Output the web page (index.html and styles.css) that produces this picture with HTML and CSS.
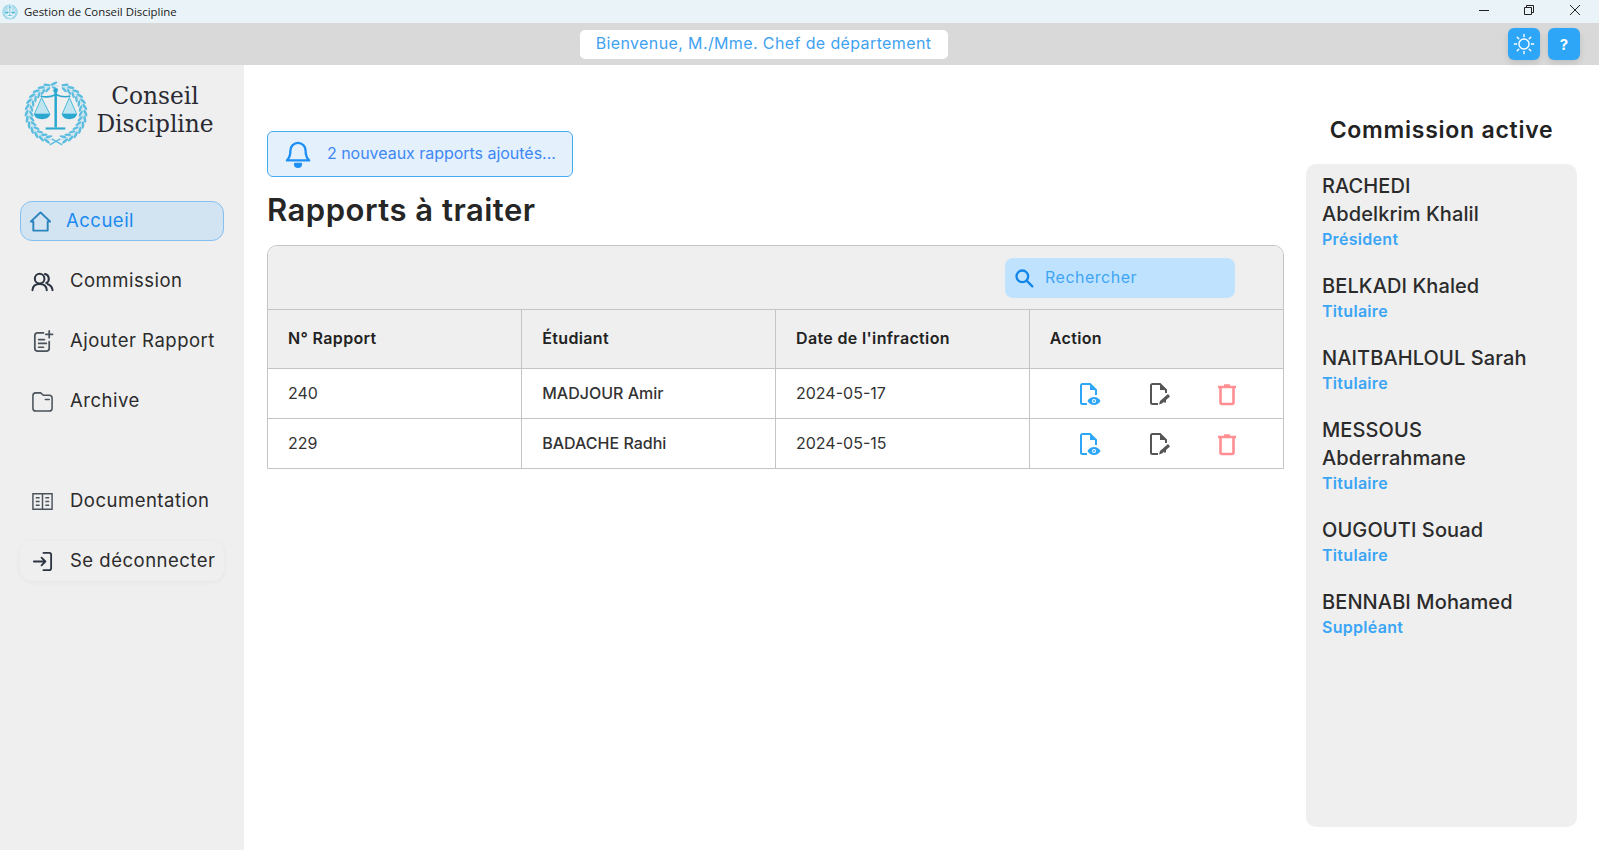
FILE: index.html
```html
<!DOCTYPE html>
<html lang="fr">
<head>
    <meta charset="UTF-8">
    <title>Gestion de Conseil Discipline</title>
    <link rel="stylesheet" href="styles.css">
</head>
<body>
    <svg class="defs" width="0" height="0">
        <symbol id="logo" viewBox="0 0 64 64">
            <g fill="#5dbde0">
                <g id="leaf-pair">
                    <ellipse cx="30" cy="3.500" rx="1.300" ry="3.600" transform="rotate(65 30 3.500)"/>
                    <ellipse cx="31" cy="8" rx="1.200" ry="3.300" transform="rotate(115 31 8)"/>
                    <path d="M27 5.800h8" stroke="#9fd8ec" stroke-width=".6"/>
                </g>
            </g>
            <g id="wreath-half" fill="#5dbde0">
                <use href="#leaf-pair" transform="rotate(22 32 32)"/>
                <use href="#leaf-pair" transform="rotate(34 32 32)"/>
                <use href="#leaf-pair" transform="rotate(46 32 32)"/>
                <use href="#leaf-pair" transform="rotate(58 32 32)"/>
                <use href="#leaf-pair" transform="rotate(70 32 32)"/>
                <use href="#leaf-pair" transform="rotate(82 32 32)"/>
                <use href="#leaf-pair" transform="rotate(94 32 32)"/>
                <use href="#leaf-pair" transform="rotate(106 32 32)"/>
                <use href="#leaf-pair" transform="rotate(118 32 32)"/>
                <use href="#leaf-pair" transform="rotate(130 32 32)"/>
                <use href="#leaf-pair" transform="rotate(142 32 32)"/>
                <use href="#leaf-pair" transform="rotate(154 32 32)"/>
                <use href="#leaf-pair" transform="rotate(166 32 32)"/>
            </g>
            <use href="#wreath-half" transform="matrix(-1 0 0 1 64 0)"/>
            <path d="M26 63l10-6M38 63l-10-6" stroke="#5dbde0" stroke-width="1.400" fill="none"/>
            <path d="M18 17L11 33h15zM45 17l-7 16h14z" fill="#bfe5f1" stroke="#45b4d8" stroke-width=".9"/>
            <path d="M17 15.500c5 1.500 10 1 15-1.500 5 2.500 9 3 14 1.500" fill="none" stroke="#2aa8d0" stroke-width="1.500"/>
            <g fill="#2aa8d0">
                <circle cx="31.500" cy="10.500" r="2.200"/>
                <rect x="30.500" y="12" width="2.400" height="34"/>
                <rect x="22" y="46" width="19" height="2"/>
                <path d="M10.500 33h16c-1 3.500-4 5-8 5s-7-1.500-8-5zM37.500 33h15c-1 3.500-3.500 5-7.500 5s-6.500-1.500-7.500-5z"/>
            </g>
        </symbol>
        <symbol id="act-view" viewBox="0 0 24 24">
            <path d="M10 22H5.500a1.500 1.500 0 0 1-1.500-1.500v-17A1.500 1.500 0 0 1 5.500 2H13l6 6v5" fill="none" stroke="#2ea6f8" stroke-width="2"/>
            <path d="M13 2l6 6h-6z" fill="#2ea6f8"/>
            <path d="M10.500 19c1.500-2.800 3.700-4 6.500-4s5 1.200 6.500 4c-1.500 2.800-3.700 4-6.500 4s-5-1.200-6.500-4z" fill="#2ea6f8"/>
            <circle cx="17" cy="19" r="2" fill="#fff"/>
            <circle cx="17" cy="19" r="1" fill="#2ea6f8"/>
        </symbol>
        <symbol id="act-edit" viewBox="0 0 24 24">
            <path d="M11 22H5.500a1.500 1.500 0 0 1-1.500-1.500v-17A1.500 1.500 0 0 1 5.500 2H13l6 6v3M18 17v3.500" fill="none" stroke="#555" stroke-width="2"/>
            <path d="M13 2l6 6h-6z" fill="#555"/>
            <path d="M12 22.500l1-3.500 8-7 2 2.500-8 7z" fill="#555"/>
        </symbol>
        <symbol id="act-del" viewBox="0 0 24 24">
            <path d="M3 5h18M9 3.500h6" stroke="#ff8f92" stroke-width="2.600" fill="none"/>
            <path d="M5.500 6v14.500a1.500 1.500 0 0 0 1.500 1.500h10a1.500 1.500 0 0 0 1.500-1.500V6" stroke="#ff8f92" stroke-width="2.600" fill="none"/>
        </symbol>
    </svg>

    <div class="titlebar">
        <svg class="titlebar-icon" width="16" height="16"><use href="#logo"/></svg>
        <span class="titlebar-text">Gestion de Conseil Discipline</span>
        <div class="window-btns">
            <svg width="12" height="12" viewBox="0 0 12 12"><path d="M1 6.500h10" stroke="#222" fill="none"/></svg>
            <svg width="12" height="12" viewBox="0 0 12 12"><path d="M1.500 3.500h7v7h-7zM3.500 3.500v-2h7v7h-2" stroke="#222" fill="none"/></svg>
            <svg class="close-btn" width="12" height="12" viewBox="0 0 12 12"><path d="M1 1l10 10M11 1L1 11" stroke="#222" fill="none"/></svg>
        </div>
    </div>

    <header class="topbar">
        <div class="welcome"><span>Bienvenue, M./Mme. Chef de département</span></div>
        <div class="top-btns">
            <button class="top-btn">
                <svg width="22" height="22" viewBox="0 0 24 24" fill="none" stroke="#fff" stroke-width="1.500" stroke-linecap="round"><circle cx="12" cy="12" r="5.500"/><path d="M12 1.500v2.500M12 20v2.500M1.500 12h2.500M20 12h2.500M4.600 4.600l1.700 1.700M17.700 17.700l1.700 1.700M4.600 19.400l1.700-1.700M17.700 6.300l1.700-1.700"/></svg>
            </button>
            <button class="top-btn">?</button>
        </div>
    </header>

    <div class="main">
        <nav class="sidebar">
            <div class="brand">
                <svg class="brand-logo" width="66" height="66"><use href="#logo"/></svg>
                <div class="brand-name">Conseil<br>Discipline</div>
            </div>
            <a class="nav-item active">
                <svg class="nav-icon" viewBox="0 0 24 24" fill="none" stroke="#2b84bd" stroke-width="2" stroke-linejoin="round"><path d="M2 12L12 2.500 22 12h-2.500v9.500h-15V12z"/></svg>
                <span>Accueil</span>
            </a>
            <a class="nav-item">
                <svg class="nav-icon" viewBox="0 0 24 24" fill="none" stroke="#2b3440" stroke-width="2.100" stroke-linecap="round"><circle cx="9" cy="9" r="5"/><path d="M1.500 21c.3-4 3-6.500 7.500-6.500S16.200 17 16.500 21M14.500 4.200a5 5 0 0 1 1.500 9.300M17.500 14.800c2.700.7 4.500 3 5 6.200"/></svg>
                <span>Commission</span>
            </a>
            <a class="nav-item">
                <svg class="nav-icon" viewBox="0 0 24 24" fill="none" stroke="#4a525c" stroke-width="1.800" stroke-linecap="round"><path d="M13 3H7a3 3 0 0 0-3 3v13a3 3 0 0 0 3 3h9a3 3 0 0 0 3-3v-7M8 10h6M8 14h8M8 18h5M19 1v7M15.500 4.500h7"/></svg>
                <span>Ajouter Rapport</span>
            </a>
            <a class="nav-item">
                <svg class="nav-icon" viewBox="0 0 24 24" fill="none" stroke="#4a525c" stroke-width="1.600" stroke-linecap="round"><path d="M2 6a3 3 0 0 1 3-3h5l3 2.500h6a3 3 0 0 1 3 3V19a3 3 0 0 1-3 3H5a3 3 0 0 1-3-3zM15 10h4"/></svg>
                <span>Archive</span>
            </a>
            <a class="nav-item nav-gap">
                <svg class="nav-icon" viewBox="0 0 24 24" fill="none" stroke="#4a525c" stroke-width="1.500"><path d="M2 4h20v16H2zM12 4v16M5 8h4M5 12h4M5 16h4M15 8h4M15 12h4M15 16h4"/></svg>
                <span>Documentation</span>
            </a>
            <a class="nav-item logout">
                <svg class="nav-icon" viewBox="0 0 24 24" fill="none" stroke="#2b3440" stroke-width="1.900" stroke-linecap="round" stroke-linejoin="round"><path d="M13 3h6a2 2 0 0 1 2 2v14a2 2 0 0 1-2 2h-6M3 12h12M11 8l4 4-4 4"/></svg>
                <span>Se déconnecter</span>
            </a>
        </nav>

        <main class="content">
            <div class="notif">
                <svg width="28" height="28" viewBox="0 0 24 24" fill="none" stroke="#1e90f5" stroke-width="2" stroke-linejoin="round"><path d="M12 2.500a6.500 6.500 0 0 0-6.500 6.500c0 5-1 6.500-3 8.500h19c-2-2-3-3.500-3-8.500A6.500 6.500 0 0 0 12 2.500z"/><path d="M9.500 20.500a2.500 2.500 0 0 0 5 0z" fill="#1e90f5"/></svg>
                <span>2 nouveaux rapports ajoutés...</span>
            </div>
            <h1 class="page-title">Rapports à traiter</h1>
            <div class="table-box">
                <div class="toolbar">
                    <div class="search">
                        <svg width="20" height="20" viewBox="0 0 24 24" fill="none" stroke="#1186e8" stroke-width="2.800" stroke-linecap="round"><circle cx="10" cy="10" r="7"/><path d="M15.500 15.500L22 22"/></svg>
                        <span>Rechercher</span>
                    </div>
                </div>
                <table class="reports">
                    <thead>
                        <tr><th>N° Rapport</th><th>Étudiant</th><th>Date de l'infraction</th><th>Action</th></tr>
                    </thead>
                    <tbody>
                        <tr>
                            <td>240</td>
                            <td class="student">MADJOUR Amir</td>
                            <td>2024-05-17</td>
                            <td>
                                <div class="actions">
                                    <svg class="act" viewBox="0 0 24 24"><use href="#act-view"/></svg>
                                    <svg class="act" viewBox="0 0 24 24"><use href="#act-edit"/></svg>
                                    <svg class="act act-del" viewBox="0 0 24 24"><use href="#act-del"/></svg>
                                </div>
                            </td>
                        </tr>
                        <tr>
                            <td>229</td>
                            <td class="student">BADACHE Radhi</td>
                            <td>2024-05-15</td>
                            <td>
                                <div class="actions">
                                    <svg class="act" viewBox="0 0 24 24"><use href="#act-view"/></svg>
                                    <svg class="act" viewBox="0 0 24 24"><use href="#act-edit"/></svg>
                                    <svg class="act act-del" viewBox="0 0 24 24"><use href="#act-del"/></svg>
                                </div>
                            </td>
                        </tr>
                    </tbody>
                </table>
            </div>
        </main>

        <aside class="commission">
            <h2 class="commission-title">Commission active</h2>
            <div class="members">
                <div class="member"><div class="member-name">RACHEDI<br>Abdelkrim Khalil</div><div class="member-role">Président</div></div>
                <div class="member"><div class="member-name">BELKADI Khaled</div><div class="member-role">Titulaire</div></div>
                <div class="member"><div class="member-name">NAITBAHLOUL Sarah</div><div class="member-role">Titulaire</div></div>
                <div class="member"><div class="member-name">MESSOUS<br>Abderrahmane</div><div class="member-role">Titulaire</div></div>
                <div class="member"><div class="member-name">OUGOUTI Souad</div><div class="member-role">Titulaire</div></div>
                <div class="member"><div class="member-name">BENNABI Mohamed</div><div class="member-role">Suppléant</div></div>
            </div>
        </aside>
    </div>
</body>
</html>
```

FILE: styles.css
```css
* {
  box-sizing: border-box;
}

body {
  margin: 0;
  height: 850px;
  overflow: hidden;
  display: flex;
  flex-direction: column;
  font-family: Inter, "Noto Sans", sans-serif;
  color: #262626;
  background-color: #fff;
}

.defs {
  position: absolute;
}

/* window chrome */
.titlebar {
  height: 23px;
  display: flex;
  align-items: center;
  padding-left: 2px;
  background-color: #eaf4f8;
}

.titlebar-text {
  margin-left: 6px;
  font-family: "Open Sans", sans-serif;
  font-size: 11.400px;
  color: #1a1a1a;
}

.window-btns {
  margin-left: auto;
  display: flex;
  gap: 33px;
  padding-right: 18px;
  margin-top: -4px;
}

.close-btn {
  margin-left: 1px;
}

/* top bar */
.topbar {
  height: 42px;
  display: flex;
  align-items: center;
  justify-content: center;
  position: relative;
  background-color: #d9d9d9;
}

.welcome {
  width: 368px;
  height: 29px;
  margin-right: 72px;
  padding-bottom: 2px;
  display: flex;
  align-items: center;
  justify-content: center;
  background-color: #fff;
  border-radius: 5px;
  color: #3fa2f0;
  font-size: 16px;
  letter-spacing: 0.380px;
}

.top-btns {
  position: absolute;
  right: 19px;
  top: 5px;
  display: flex;
  gap: 8px;
}

.top-btn {
  width: 32px;
  height: 32px;
  padding: 0;
  display: flex;
  align-items: center;
  justify-content: center;
  border: none;
  border-radius: 6px;
  background-color: #2ea6f8;
  color: #fff;
  font-family: Inter, sans-serif;
  font-size: 15px;
  font-weight: 700;
  box-shadow: 0 3px 6px rgba(0, 0, 0, 0.12);
}

.main {
  flex: 1;
  display: flex;
  min-height: 0;
}

/* sidebar */
.sidebar {
  width: 244px;
  flex-shrink: 0;
  padding: 16px 20px 0;
  display: flex;
  flex-direction: column;
  gap: 20px;
  background-color: #efefef;
}

.brand {
  height: 100px;
  display: flex;
  align-items: flex-start;
  padding-left: 3px;
}

.brand-logo {
  margin-top: -1px;
  flex-shrink: 0;
}

.brand-name {
  width: 130px;
  margin-left: 1px;
  padding-top: 1px;
  text-align: center;
  font-family: "DejaVu Serif", serif;
  font-size: 23.300px;
  line-height: 28px;
  color: #2a2a33;
}

.nav-item {
  height: 40px;
  padding-bottom: 2px;
  display: flex;
  align-items: center;
  gap: 16px;
  padding-left: 10px;
  font-size: 18.500px;
  letter-spacing: 0.500px;
  color: #2b2b2b;
  border-radius: 12px;
  border: 1px solid transparent;
}

.nav-item .nav-icon {
  margin-top: 2px;
}

.nav-item.active {
  gap: 14px;
  padding-left: 8px;
  background-color: #d2e4f2;
  border-color: #85c0f0;
  color: #1c8af0;
}

.nav-gap {
  margin-top: 40px;
}

.logout {
  box-shadow: 0 1px 5px rgba(0, 0, 0, 0.05);
}

.nav-icon {
  width: 23px;
  height: 23px;
  flex-shrink: 0;
}

/* centre column */
.content {
  flex: 1;
  min-width: 0;
  padding: 66px 22px 0 23px;
}

.notif {
  width: 306px;
  height: 46px;
  padding-bottom: 2px;
  display: flex;
  align-items: center;
  gap: 15px;
  padding-left: 16px;
  background-color: #e4f0fc;
  border: 1px solid #45aaf2;
  border-radius: 6px;
  color: #3d88f5;
  font-size: 16px;
  letter-spacing: -0.030px;
}

.notif svg {
  margin-top: 2px;
}

.page-title {
  margin: 13px 0 15px;
  font-size: 31px;
  line-height: 40px;
  font-weight: 600;
  letter-spacing: 0.500px;
  color: #262626;
}

.table-box {
  border: 1px solid #c4c4c8;
  border-radius: 10px 10px 0 0;
  overflow: hidden;
}

.toolbar {
  height: 63px;
  padding: 12px 48px 0 0;
  display: flex;
  justify-content: flex-end;
  background-color: #efefef;
}

.search {
  width: 230px;
  height: 40px;
  padding-bottom: 2px;
  display: flex;
  align-items: center;
  gap: 11px;
  padding-left: 9px;
  background-color: #bfe3ff;
  border-radius: 8px;
  color: #41a5f5;
  font-size: 16px;
  letter-spacing: 0.500px;
}

.search svg {
  margin-top: 2px;
}

.reports {
  width: 100%;
  border-collapse: collapse;
  table-layout: fixed;
  font-size: 16px;
}

.reports th {
  height: 59px;
  padding: 0 0 2px 20px;
  text-align: left;
  font-weight: 600;
  letter-spacing: 0.350px;
  background-color: #efefef;
  border-top: 1px solid #c4c4c8;
  border-bottom: 1px solid #c4c4c8;
  color: #222;
}

.reports td {
  height: 50px;
  padding: 0 0 2px 20px;
  color: #333;
  border-bottom: 1px solid #c4c4c8;
}

.reports th + th,
.reports td + td {
  border-left: 1px solid #c4c4c8;
}

.reports tr:last-child td {
  height: 49px;
  padding-bottom: 0;
  border-bottom: none;
}

.student {
  font-weight: 500;
}

.actions {
  display: flex;
  gap: 46px;
  padding: 2px 0 0 27px;
}

.act {
  width: 24px;
  height: 24px;
}

.act-del {
  margin-left: -2px;
}

/* commission panel */
.commission {
  width: 271px;
  flex-shrink: 0;
  margin-right: 22px;
  margin-bottom: 23px;
  display: flex;
  flex-direction: column;
}

.commission-title {
  margin: 0;
  height: 99px;
  padding-top: 49px;
  text-align: center;
  font-size: 23px;
  line-height: 32px;
  font-weight: 600;
  letter-spacing: 0.750px;
  color: #222;
}

.members {
  flex: 1;
  padding: 8px 16px;
  background-color: #efefef;
  border-radius: 10px;
}

.member {
  margin-bottom: 22px;
}

.member-name {
  font-size: 20px;
  line-height: 28px;
  font-weight: 500;
  letter-spacing: 0.100px;
  color: #2b2b2b;
}

.member-role {
  font-size: 16px;
  line-height: 22px;
  font-weight: 600;
  letter-spacing: 0.300px;
  color: #3ba5f5;
}
```
